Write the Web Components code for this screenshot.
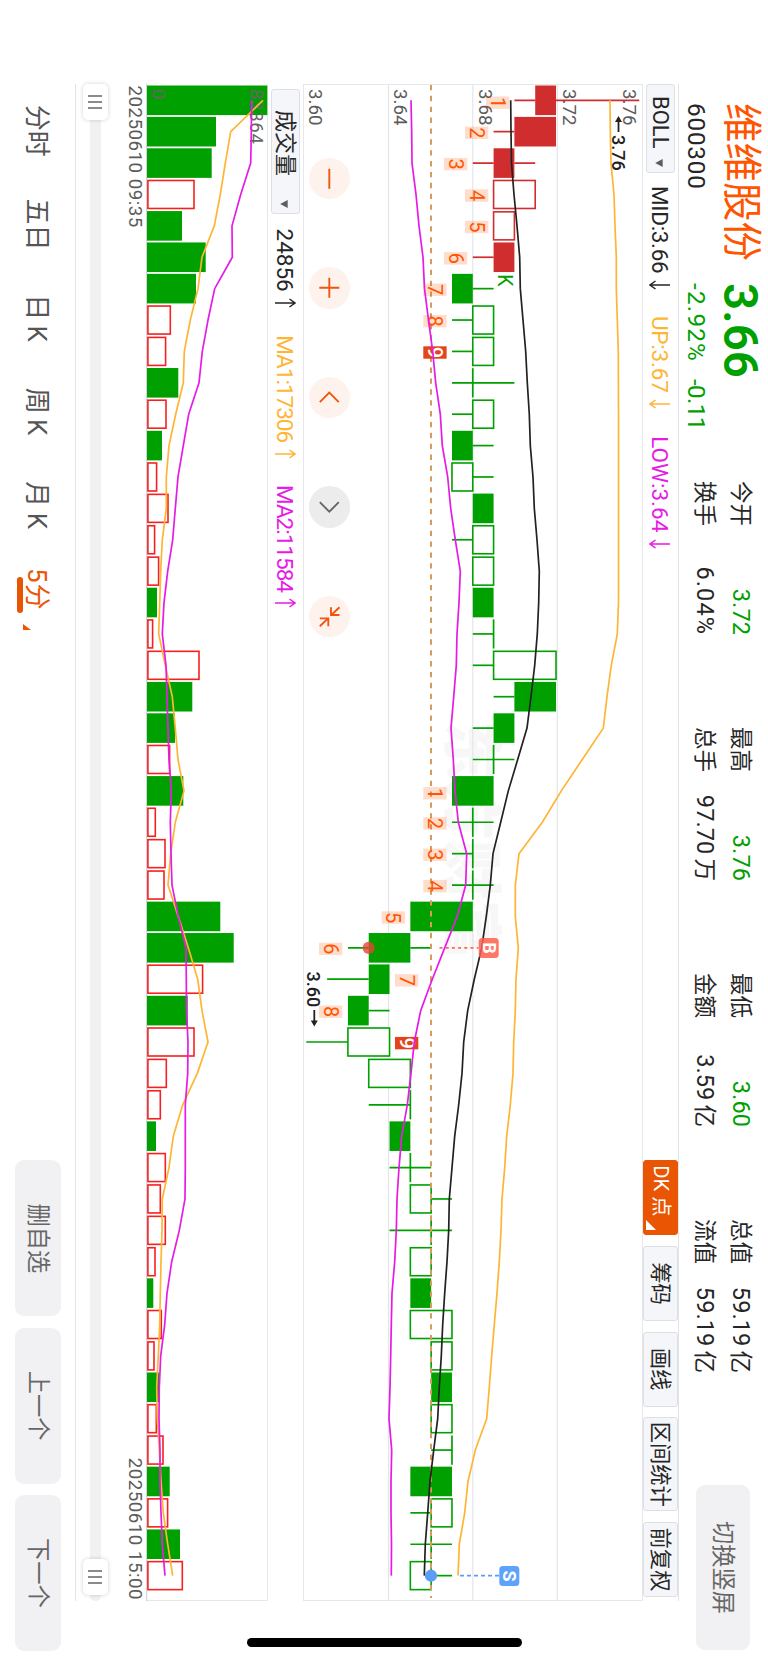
<!DOCTYPE html>
<html lang="zh-CN">
<head>
<meta charset="UTF-8">
<title>维维股份 600300</title>
<style>
    html, body {
        margin: 0;
        width: 768px;
        height: 1662px;
        overflow: hidden;
        background: #ffffff;
    }
</style>
</head>
<body>
<trade-screen>
    <quote-header slot="header" name="维维股份" code="600300" price="3.66" percent="-2.92%" change="-0.11">
        <quote-stat label="今开" value="3.72" down></quote-stat>
        <quote-stat label="最高" value="3.76" down></quote-stat>
        <quote-stat label="最低" value="3.60" down></quote-stat>
        <quote-stat label="总值" value="59.19" unit="亿"></quote-stat>
        <quote-stat label="换手" value="6.04%" style="--ls: 1.1px"></quote-stat>
        <quote-stat label="总手" value="97.70" unit="万"></quote-stat>
        <quote-stat label="金额" value="3.59" unit="亿"></quote-stat>
        <quote-stat label="流值" value="59.19" unit="亿"></quote-stat>
        <flat-button slot="action" style="--w: 165px; --h: 54px">切换竖屏</flat-button>
    </quote-header>

    <indicator-bar slot="main-bar" class="top">
        <indicator-select style="--w: 89px">BOLL</indicator-select>
        <indicator-value style="--ml: 13px; --ls: -0.3px" dir-arrow="down">MID:3.66</indicator-value>
        <indicator-value style="--ml: 26px; --ls: -0.2px; --c: #ffb534" dir-arrow="down">UP:3.67</indicator-value>
        <indicator-value style="--ml: 27px; --c: #e61be6" dir-arrow="down">LOW:3.64</indicator-value>
        <tool-chip slot="tools" active>DK 点</tool-chip>
        <tool-chip slot="tools">筹码</tool-chip>
        <tool-chip slot="tools">画线</tool-chip>
        <tool-chip slot="tools" style="--w: 94px">区间统计</tool-chip>
        <tool-chip slot="tools">前复权</tool-chip>
    </indicator-bar>

    <kline-chart slot="main-chart">
        <round-button icon="minus"></round-button>
        <round-button icon="plus"></round-button>
        <round-button icon="prev"></round-button>
        <round-button icon="next" disabled></round-button>
        <round-button icon="collapse"></round-button>
    </kline-chart>

    <indicator-bar slot="sub-bar" class="sub">
        <indicator-select style="--w: 125px; --pad: 20px">成交量</indicator-select>
        <indicator-value style="--ml: 14.5px" dir-arrow="up">24856</indicator-value>
        <indicator-value style="--ml: 27px; --ls: -1px; --c: #ffb534" dir-arrow="up">MA1:17306</indicator-value>
        <indicator-value style="--ml: 26.5px; --ls: -1px; --c: #e61be6" dir-arrow="up">MA2:11584</indicator-value>
    </indicator-bar>

    <volume-chart slot="sub-chart"></volume-chart>
    <range-slider slot="range" from="20250610 09:35" to="20250610 15:00"></range-slider>

    <period-tabs slot="footer">
        <period-tab>分时</period-tab>
        <period-tab>五日</period-tab>
        <period-tab>日&thinsp;K</period-tab>
        <period-tab>周&thinsp;K</period-tab>
        <period-tab>月&thinsp;K</period-tab>
        <period-tab active>5分</period-tab>
        <flat-button slot="actions">删自选</flat-button>
        <flat-button slot="actions">上一个</flat-button>
        <flat-button slot="actions">下一个</flat-button>
    </period-tabs>
</trade-screen>

<script>
const GREEN = '#00a000'
const RED = '#d02d2f'
const STEP = 31.39
const FIRST = 16.3

// [body low, body high, wick low, wick high, style], prices in cents above 3.60
// style: f = filled, h = hollow; the first six bars are red
const candles = [
    [11, 12, 10, 16, 'f'], [10, 12, 9, 12, 'f'], [9, 10, 8, 11, 'f'], [9, 11, 9, 11, 'h'],
    [9, 10, 9, 10, 'h'], [9, 10, 8, 10, 'f'], [7, 8, 7, 9, 'f'], [8, 9, 7, 9, 'h'],
    [8, 9, 7, 9, 'h'], [8, 8, 7, 10, 'h'], [8, 9, 7, 9, 'h'], [7, 8, 7, 9, 'f'],
    [7, 8, 7, 9, 'h'], [8, 9, 8, 9, 'f'], [8, 9, 7, 9, 'h'], [8, 9, 8, 9, 'h'],
    [8, 9, 8, 9, 'f'], [9, 9, 8, 9, 'h'], [9, 12, 8, 12, 'h'], [10, 12, 9, 12, 'f'],
    [9, 10, 8, 10, 'f'], [9, 9, 8, 10, 'h'], [7, 9, 7, 9, 'f'], [8, 8, 7, 9, 'h'],
    [8, 8, 7, 8, 'h'], [8, 8, 7, 9, 'h'], [5, 8, 5, 8, 'f'], [3, 5, 2, 6, 'f'],
    [3, 4, 1, 4, 'f'], [2, 3, 2, 4, 'f'], [2, 4, 0, 4, 'h'], [3, 5, 3, 5, 'h'],
    [5, 5, 3, 5, 'h'], [4, 5, 4, 5, 'f'], [5, 5, 4, 6, 'h'], [5, 6, 5, 7, 'h'],
    [6, 6, 4, 7, 'h'], [5, 6, 5, 6, 'h'], [5, 6, 5, 6, 'f'], [5, 7, 5, 7, 'h'],
    [6, 7, 6, 7, 'h'], [6, 7, 6, 7, 'f'], [6, 7, 6, 7, 'h'], [7, 7, 6, 7, 'h'],
    [5, 7, 5, 7, 'f'], [6, 7, 5, 7, 'h'], [6, 6, 5, 7, 'h'], [5, 6, 5, 7, 'h']
]

const boll = {
    up: [610, 610.3, 611, 614, 615, 616.3, 616.3, 617.3, 618.3, 618.4, 618.5, 618.5, 618.5, 618.5, 618.5, 618.5,
        618.5, 617.3, 611.3, 607, 603.3, 582.3, 561.3, 542.3, 519, 515.3, 515.3, 518.3, 516, 515.3, 513.7, 513,
        510.3, 506.7, 504.7, 502, 501, 499.3, 497, 494.3, 491.7, 489.3, 486.7, 475.3, 468, 464.7, 459.3, 458],
    mid: [510.7, 511, 511.5, 514, 517, 519.7, 520.3, 523, 525.7, 527.3, 529.3, 530.3, 533, 534.3, 537, 539.3,
        538.7, 537.3, 534.7, 531, 527, 517.7, 508.3, 500.7, 493, 490.3, 486.3, 481.7, 474.3, 467.7, 463.7, 462,
        458.7, 454.7, 452, 449.3, 448.7, 447, 444.7, 442.7, 441.3, 439.3, 437.7, 433.7, 430, 427.7, 425.3, 424.3],
    low: [411, 411.7, 412, 416, 419, 423, 424.5, 428.5, 432.7, 435.7, 440.3, 442.3, 447.7, 450.7, 455.3, 460.3,
        459, 457, 456.3, 453.7, 451, 453.3, 455, 458.3, 466.7, 465.7, 457.3, 444.7, 432.3, 420.7, 414.3, 411,
        407.3, 401.7, 399, 397, 396.3, 394.7, 392, 391.3, 390.7, 390, 389, 391.7, 391, 391, 391.5, 391.3]
}

// nine-turn counters: [bar, digit, bottom edge]
const turns = [
    [0, 1, 486], [1, 2, 465], [2, 3, 444], [3, 4, 465], [4, 5, 465], [5, 6, 444], [6, 7, 423.3], [7, 8, 423.3], [8, 9, 423.3],
    [22, 1, 423.3], [23, 2, 423.3], [24, 3, 423.3], [25, 4, 423.3], [26, 5, 381.7], [27, 6, 319], [28, 7, 395], [29, 8, 319], [30, 9, 395]
]

const volumes = [
    267.3, 216, 211.7, 194.7, 182, 205.7, 196, 171, 166.3, 178.3, 166.7, 162, 157.3, 168.7, 155.3, 159.3,
    157, 153.3, 199.7, 192.3, 175, 170.3, 183.3, 156, 165.7, 164.7, 220.3, 233.7, 203.3, 187.7, 194.7, 167,
    161, 156, 166, 161, 166, 155.7, 153.3, 162, 154.7, 159, 157, 163.7, 169.7, 168.3, 180, 183
]
const volumeFilled = [0, 1, 2, 4, 5, 6, 9, 11, 16, 19, 20, 22, 26, 27, 29, 33, 38, 41, 44, 46]
const volumeMa = {
    ma1: [263, 230.7, 225.3, 220.3, 214.3, 202, 198, 190.3, 184.3, 183.3, 175.7, 169, 166.3, 166.3, 162.3, 160.7,
        159.7, 158.7, 165.3, 172.3, 175.3, 178, 184, 175.3, 170.7, 168, 178.3, 188.3, 197.7, 202, 208, 197.3,
        182.7, 173.3, 169, 162.3, 162, 161, 160.3, 159.7, 158.3, 156.7, 157.3, 159.3, 161, 163.3, 167.7, 172.7],
    ma2: [251.7, 251.3, 250.7, 240.7, 232, 232.3, 214.7, 208, 202.3, 199, 188.7, 183.3, 178, 175.3, 172.7, 167.7,
        164, 162.3, 166, 167, 168, 169, 171.3, 170.3, 171, 172, 178.3, 186, 186.3, 186.5, 188, 187.7,
        185.3, 185.3, 185.3, 185, 179.3, 171.7, 167, 164.7, 160.7, 159.3, 159, 160, 160, 161, 162.3, 165]
}

const barX = (i) => FIRST + STEP * i
const r = (n) => Math.round(n * 100) / 100
const polyline = (values, top, color) =>
    `<polyline points="${values.map((v, i) => r(barX(i)) + ',' + r(top - v)).join(' ')}" fill="none" stroke="${color}" stroke-width="1.7" stroke-linejoin="round"/>`

class TradeScreen extends HTMLElement {
    constructor() {
        super()
        this.attachShadow({ mode: 'open' })
        this.shadowRoot.innerHTML = `
            <style>
                :host {
                    display: block;
                    width: 768px;
                    height: 1662px;
                    overflow: hidden;
                    background: #ffffff;
                }
                /* landscape screen turned a quarter clockwise */
                .stage {
                    display: grid;
                    box-sizing: border-box;
                    grid-template-columns: 1517px 61px;
                    grid-template-rows: 89px 36px 340px 35px 122px 70px 76px;
                    width: 1662px;
                    height: 768px;
                    padding-left: 84px;
                    color: #262626;
                    font-family: Roboto, "Noto Sans CJK SC", sans-serif;
                    font-size: 22.5px;
                    transform-origin: 0 0;
                    transform: translateX(768px) rotate(90deg);
                }
                .wide { grid-column: 1 / 3; }
                .one { grid-column: 1; }
                .home {
                    grid-column: 2;
                    grid-row: 2 / 6;
                    justify-self: end;
                    width: 9px;
                    height: 275px;
                    margin: 157px 15px 0 0;
                    border-radius: 5px;
                    background: #000000;
                }
            </style>
            <div class="stage">
                <div class="wide"><slot name="header"></slot></div>
                <div class="one"><slot name="main-bar"></slot></div>
                <div class="one"><slot name="main-chart"></slot></div>
                <div class="one"><slot name="sub-bar"></slot></div>
                <div class="one"><slot name="sub-chart"></slot></div>
                <div class="one"><slot name="range"></slot></div>
                <div class="wide"><slot name="footer"></slot></div>
                <div class="home"></div>
            </div>
        `
    }
}

class QuoteHeader extends HTMLElement {
    constructor() {
        super()
        this.attachShadow({ mode: 'open' })
    }

    connectedCallback() {
        const get = (name) => this.getAttribute(name)
        this.shadowRoot.innerHTML = `
            <style>
                :host { display: flex; height: 89px; }
                .quote {
                    display: grid;
                    grid-template-columns: 180px 198px;
                    grid-template-rows: 55px 30px;
                    padding-left: 19px;
                }
                .name { font-size: 39.5px; line-height: 54px; color: #ff5500; }
                .price { font-size: 47.5px; line-height: 56px; font-weight: 600; color: ${GREEN}; }
                .code { font-size: 24.3px; line-height: 34px; letter-spacing: 0.8px; }
                .change { display: flex; gap: 17px; font-size: 24.3px; line-height: 34px; color: ${GREEN}; }
                .percent { letter-spacing: 1.2px; }
                .diff { letter-spacing: -0.7px; }
                .stats {
                    display: grid;
                    grid-template-columns: repeat(4, 154px);
                    grid-template-rows: 36px 36px;
                    column-gap: 92px;
                    padding-top: 9px;
                }
                .action { padding: 18px 0 0 112px; }
            </style>
            <div class="quote">
                <div class="name">${get('name')}</div>
                <div class="price">${get('price')}</div>
                <div class="code">${get('code')}</div>
                <div class="change"><span class="percent">${get('percent')}</span><span class="diff">${get('change')}</span></div>
            </div>
            <div class="stats"><slot></slot></div>
            <div class="action"><slot name="action"></slot></div>
        `
    }
}

class QuoteStat extends HTMLElement {
    constructor() {
        super()
        this.attachShadow({ mode: 'open' })
    }

    connectedCallback() {
        const unit = this.getAttribute('unit')
        this.shadowRoot.innerHTML = `
            <style>
                :host { display: flex; justify-content: space-between; align-items: center; line-height: 36px; }
                .label { font-size: 22.5px; }
                .value { font-size: 23.5px; letter-spacing: var(--ls, 0.1px); }
                .unit { margin-left: 4px; font-size: 22.5px; }
                :host([down]) .value { color: ${GREEN}; }
            </style>
            <span class="label">${this.getAttribute('label')}</span>
            <span class="value">${this.getAttribute('value')}${unit ? `<span class="unit">${unit}</span>` : ''}</span>
        `
    }
}

class FlatButton extends HTMLElement {
    constructor() {
        super()
        this.attachShadow({ mode: 'open' })
        this.shadowRoot.innerHTML = `
            <style>
                :host {
                    display: flex;
                    align-items: center;
                    justify-content: center;
                    width: var(--w, 156px);
                    height: var(--h, 46px);
                    border-radius: 9px;
                    background: #f1f1f3;
                    color: #666666;
                    font-size: 23.3px;
                    line-height: 30px;
                }
            </style>
            <slot></slot>
        `
    }
}

class IndicatorBar extends HTMLElement {
    constructor() {
        super()
        this.attachShadow({ mode: 'open' })
        this.shadowRoot.innerHTML = `
            <style>
                :host { display: flex; align-items: center; box-sizing: border-box; height: 35px; }
                :host(.top) { height: 36px; border-top: 1px solid #e4e4e6; }
                :host(.sub) { padding-left: 5px; }
                .tools { display: flex; gap: 10.7px; margin-left: auto; padding-right: 4px; }
            </style>
            <slot></slot>
            <div class="tools"><slot name="tools"></slot></div>
        `
    }
}

class IndicatorSelect extends HTMLElement {
    constructor() {
        super()
        this.attachShadow({ mode: 'open' })
        this.shadowRoot.innerHTML = `
            <style>
                :host {
                    display: flex;
                    box-sizing: border-box;
                    align-items: center;
                    justify-content: space-between;
                    width: var(--w);
                    height: 29px;
                    padding: 0 5px 0 var(--pad, 11px);
                    border: 1px solid #dcdfe5;
                    border-radius: 3px;
                    background: #f5f6f9;
                    font-size: 22px;
                    line-height: 27px;
                }
                svg { margin-top: 3px; }
            </style>
            <span><slot></slot></span>
            <svg width="8" height="8"><path d="M0 0.3H8L4 7.8Z" fill="#5d5d5d"/></svg>
        `
    }
}

class IndicatorValue extends HTMLElement {
    constructor() {
        super()
        this.attachShadow({ mode: 'open' })
    }

    connectedCallback() {
        const up = this.getAttribute('dir-arrow') === 'up'
        const arrow = up ? 'M5 21V1M1 6.5L5 1L9 6.5' : 'M5 1V21M1 15.5L5 21L9 15.5'
        this.shadowRoot.innerHTML = `
            <style>
                :host {
                    display: flex;
                    align-items: center;
                    margin-left: var(--ml);
                    color: var(--c, #262626);
                    letter-spacing: var(--ls, 0);
                    line-height: 34px;
                    white-space: nowrap;
                }
                svg { margin-left: 6.5px; }
            </style>
            <span><slot></slot></span>
            <svg width="10" height="22"><path d="${arrow}" fill="none" stroke="currentColor" stroke-width="1.5"/></svg>
        `
    }
}

class ToolChip extends HTMLElement {
    constructor() {
        super()
        this.attachShadow({ mode: 'open' })
        this.shadowRoot.innerHTML = `
            <style>
                :host {
                    display: flex;
                    position: relative;
                    box-sizing: border-box;
                    align-items: center;
                    justify-content: center;
                    width: var(--w, 75px);
                    height: 35px;
                    border: 1px solid #dcdfe5;
                    border-radius: 3px;
                    background: #f5f6f9;
                    font-size: 21.3px;
                    line-height: 33px;
                    white-space: nowrap;
                }
                :host([active]) {
                    justify-content: flex-start;
                    padding-left: 4px;
                    border-color: #ea5504;
                    background: #ea5504;
                    color: #ffffff;
                    font-size: 20.3px;
                }
                svg { display: none; position: absolute; right: 4px; bottom: 2px; }
                :host([active]) svg { display: block; }
            </style>
            <slot></slot>
            <svg width="10" height="10"><path d="M10 0V10H0Z" fill="#ffffff"/></svg>
        `
    }
}

const icons = {
    minus: '<path d="M-10 0H10"/>',
    plus: '<path d="M-10 0H10M0 -10V10"/>',
    prev: '<path d="M4.5 -9.5L-5 0L4.5 9.5"/>',
    next: '<path d="M-4.5 -9.5L5 0L-4.5 9.5"/>',
    collapse: '<path d="M-9.5 -10.2L-1.7 -2M-9.5 -1.7H-1.7V-10.2M9.5 9.5L1.7 1.2M1.7 9.5V1H9.5"/>'
}

class RoundButton extends HTMLElement {
    constructor() {
        super()
        this.attachShadow({ mode: 'open' })
    }

    connectedCallback() {
        this.shadowRoot.innerHTML = `
            <style>
                :host {
                    display: block;
                    width: 41.4px;
                    height: 41.4px;
                    border-radius: 50%;
                    background: #fef2ec;
                    color: #f0560f;
                }
                :host([disabled]) { background: #ececec; color: #666666; }
                svg { display: block; width: 100%; height: 100%; }
            </style>
            <svg viewBox="-20.7 -20.7 41.4 41.4" fill="none" stroke="currentColor" stroke-width="1.9">
                ${icons[this.getAttribute('icon')]}
            </svg>
        `
    }
}

class KlineChart extends HTMLElement {
    constructor() {
        super()
        this.attachShadow({ mode: 'open' })
        this.render()
    }

    drawCandle([low, high, wickLow, wickHigh, style], i) {
        const y = (cents) => r(336.7 - 20.81 * cents)
        const x = r(barX(i))
        const color = i < 6 ? RED : GREEN
        const wick = `<path d="M${x} ${y(wickLow)}V${y(low)}M${x} ${y(high)}V${y(wickHigh)}" stroke="${color}" stroke-width="1.7"/>`
        if (low === high) {
            return wick + `<path d="M${r(x - 14.6)} ${y(low)}H${r(x + 14.6)}" stroke="${color}" stroke-width="1.7"/>`
        }
        const height = r(y(low) - y(high))
        if (style === 'f') {
            return wick + `<rect x="${r(x - 14.8)}" y="${y(high)}" width="29.6" height="${height}" fill="${color}"/>`
        }
        return wick + `<rect x="${r(x - 14)}" y="${y(high)}" width="28" height="${height}" fill="#ffffff" stroke="${color}" stroke-width="1.6"/>`
    }

    drawTurn([i, digit, bottom]) {
        const x = r(barX(i) + (digit === 1 ? 2.4 : 1.1))
        const y = r(643 - bottom)
        const last = digit === 9
        return `<rect x="${r(x - 6.2)}" y="${r(y - 23.3)}" width="12.4" height="23.3" fill="${last ? '#e5431a' : '#ff5500'}" fill-opacity="${last ? 1 : 0.2}"/>
            <text x="${x}" y="${r(y - 4.6)}" text-anchor="middle" font-size="20" ${last ? 'font-weight="500" fill="#ffffff"' : 'fill="#ff5500"'}>${digit}</text>`
    }

    render() {
        const labels = [['3.60', 334.5], ['3.64', 249], ['3.68', 164.5], ['3.72', 80], ['3.76', 20.5]]
        this.shadowRoot.innerHTML = `
            <style>
                :host { display: block; position: relative; height: 340px; }
                svg { display: block; }
                .controls {
                    display: flex;
                    gap: 68.2px;
                    position: absolute;
                    left: 73.6px;
                    top: 292.6px;
                }
            </style>
            <svg width="1517" height="340" font-family="Roboto, sans-serif">
                <text x="636" y="193" font-family="Noto Sans CJK SC" font-weight="900" font-size="60" fill="#f7f7f8">东方财富</text>
                <rect x="0.5" y="0.5" width="1516" height="339" fill="none" stroke="#e6e7ea"/>
                <path d="M0 85.7H1517M0 170.2H1517M0 254.5H1517" stroke="#e3e5ec" stroke-width="1.2"/>
                ${labels.map(([text, y]) => `<text x="5" y="${y}" font-size="18.7" fill="#5c5c5c">${text}</text>`).join('')}
                ${candles.map(this.drawCandle).join('')}
                <path d="M1 212H1514" stroke="#d59c5d" stroke-width="2" stroke-dasharray="5.3 5.57"/>
                ${turns.map(this.drawTurn).join('')}
                ${polyline(boll.up, 643, '#ffb534')}
                ${polyline(boll.mid, 643, '#222222')}
                ${polyline(boll.low, 643, '#e61be6')}
                <text x="190.2" y="145" font-size="19.5" fill="${GREEN}">K</text>
                <g font-size="18" font-weight="500" fill="#222222">
                    <path d="M34 24.5H48" stroke="#222222" stroke-width="1.8"/>
                    <path d="M32 24.5L38 21V28Z"/>
                    <text x="51" y="30.6">3.76</text>
                    <text x="887.5" y="335.6">3.60</text>
                    <path d="M926 328.7H937" stroke="#222222" stroke-width="1.8"/>
                    <path d="M942.5 328.7L936.5 325.2V332.2Z"/>
                </g>
                <path d="M863.9 203.5V164.5" stroke="#ff6a57" stroke-width="1.6" stroke-dasharray="3 3.2"/>
                <circle cx="863.9" cy="274.3" r="6.1" fill="#e5452f" fill-opacity="0.8"/>
                <rect x="854" y="144.3" width="20" height="20" rx="3.5" fill="#ff5f4c" fill-opacity="0.85"/>
                <text x="864" y="160.5" text-anchor="middle" font-size="18" font-weight="700" fill="#ffffff">B</text>
                <path d="M1491.7 183V144" stroke="#5a9cf8" stroke-width="1.8" stroke-dasharray="4 3"/>
                <circle cx="1491.7" cy="212" r="6.1" fill="#5a9cf8"/>
                <rect x="1482" y="123.7" width="20" height="20" rx="3.5" fill="#5fa2fb"/>
                <text x="1492" y="140" text-anchor="middle" font-size="18" font-weight="700" fill="#ffffff">S</text>
            </svg>
            <div class="controls"><slot></slot></div>
        `
    }
}

class VolumeChart extends HTMLElement {
    constructor() {
        super()
        this.attachShadow({ mode: 'open' })
        this.render()
    }

    drawBar(level, i) {
        const x = barX(i)
        if (volumeFilled.includes(i)) {
            return `<rect x="${r(x - 14.8)}" y="${r(268 - level)}" width="29.6" height="${r(level - 147)}" fill="${GREEN}"/>`
        }
        return `<rect x="${r(x - 14)}" y="${r(268.7 - level)}" width="28" height="${r(level - 148.6)}" fill="#ffffff" stroke="#f5201f" stroke-width="1.6"/>`
    }

    render() {
        this.shadowRoot.innerHTML = `
            <style>
                :host { display: block; height: 122px; }
                svg { display: block; }
            </style>
            <svg width="1517" height="122" font-family="Roboto, sans-serif">
                <path d="M0 0.5H1516.5V121" fill="none" stroke="#e6e7ea"/>
                <path d="M0 121.4H1517" stroke="#d3d4db" stroke-width="1.2"/>
                ${volumes.map(this.drawBar).join('')}
                <g font-size="18.7" fill="#666666">
                    <text x="5" y="18" letter-spacing="0.6">83364</text>
                    <text x="5" y="116.5">0</text>
                </g>
                ${polyline(volumeMa.ma1, 268, '#ffb534')}
                ${polyline(volumeMa.ma2, 268, '#e61be6')}
            </svg>
        `
    }
}

class RangeSlider extends HTMLElement {
    constructor() {
        super()
        this.attachShadow({ mode: 'open' })
    }

    connectedCallback() {
        const grip = '<svg width="14" height="14"><path d="M1 0V14M7 0V14M13 0V14" stroke="#666666" stroke-width="1.6"/></svg>'
        this.shadowRoot.innerHTML = `
            <style>
                :host { display: block; height: 70px; }
                .dates {
                    display: flex;
                    justify-content: space-between;
                    height: 38px;
                    padding: 0 1px 0 1.5px;
                    font-size: 18.7px;
                    line-height: 22px;
                    letter-spacing: 0.5px;
                    color: #5c5c5c;
                }
                .track {
                    display: flex;
                    justify-content: space-between;
                    align-items: center;
                    height: 11px;
                    margin-top: 7px;
                    padding-right: 6.5px;
                    border-radius: 6px;
                    background: #f1f1f4;
                }
                .handle {
                    display: flex;
                    align-items: center;
                    justify-content: center;
                    width: 36px;
                    height: 25px;
                    border-radius: 5px;
                    background: #ffffff;
                    box-shadow: 0 0 4px rgba(0, 0, 0, 0.18);
                }
            </style>
            <div class="dates"><span>${this.getAttribute('from')}</span><span>${this.getAttribute('to')}</span></div>
            <div class="track">
                <div class="handle">${grip}</div>
                <div class="handle">${grip}</div>
            </div>
        `
    }
}

class PeriodTabs extends HTMLElement {
    constructor() {
        super()
        this.attachShadow({ mode: 'open' })
        this.shadowRoot.innerHTML = `
            <style>
                :host { display: grid; grid-template-columns: 1517px 61px; height: 76px; }
                .tabs { display: flex; grid-area: 1 / 1; border-top: 1px solid #e4e4e6; }
                .actions {
                    display: flex;
                    grid-area: 1 / 1 / 2 / 3;
                    justify-self: end;
                    gap: 11.3px;
                    padding: 15px 11px 0 0;
                }
            </style>
            <div class="tabs"><slot></slot></div>
            <div class="actions"><slot name="actions"></slot></div>
        `
    }
}

class PeriodTab extends HTMLElement {
    constructor() {
        super()
        this.attachShadow({ mode: 'open' })
        this.shadowRoot.innerHTML = `
            <style>
                :host {
                    display: flex;
                    align-items: center;
                    justify-content: center;
                    width: 93.6px;
                    height: 75px;
                    font-size: 26px;
                    line-height: 36px;
                    color: #555555;
                }
                .text { position: relative; white-space: nowrap; }
                svg, .line { display: none; }
                :host([active]) { color: #ea5504; letter-spacing: 1px; }
                :host([active]) svg { display: block; margin: 20px 0 0 13px; }
                :host([active]) .line {
                    display: block;
                    position: absolute;
                    right: -2px;
                    bottom: -2px;
                    width: 36px;
                    height: 5.5px;
                    border-radius: 3px;
                    background: #ea5504;
                }
            </style>
            <span class="text"><slot></slot><i class="line"></i></span>
            <svg width="6" height="8"><path d="M6 0V8H0Z" fill="#ea5504"/></svg>
        `
    }
}

customElements.define('trade-screen', TradeScreen)
customElements.define('quote-header', QuoteHeader)
customElements.define('quote-stat', QuoteStat)
customElements.define('flat-button', FlatButton)
customElements.define('indicator-bar', IndicatorBar)
customElements.define('indicator-select', IndicatorSelect)
customElements.define('indicator-value', IndicatorValue)
customElements.define('tool-chip', ToolChip)
customElements.define('round-button', RoundButton)
customElements.define('kline-chart', KlineChart)
customElements.define('volume-chart', VolumeChart)
customElements.define('range-slider', RangeSlider)
customElements.define('period-tabs', PeriodTabs)
customElements.define('period-tab', PeriodTab)
</script>
</body>
</html>
